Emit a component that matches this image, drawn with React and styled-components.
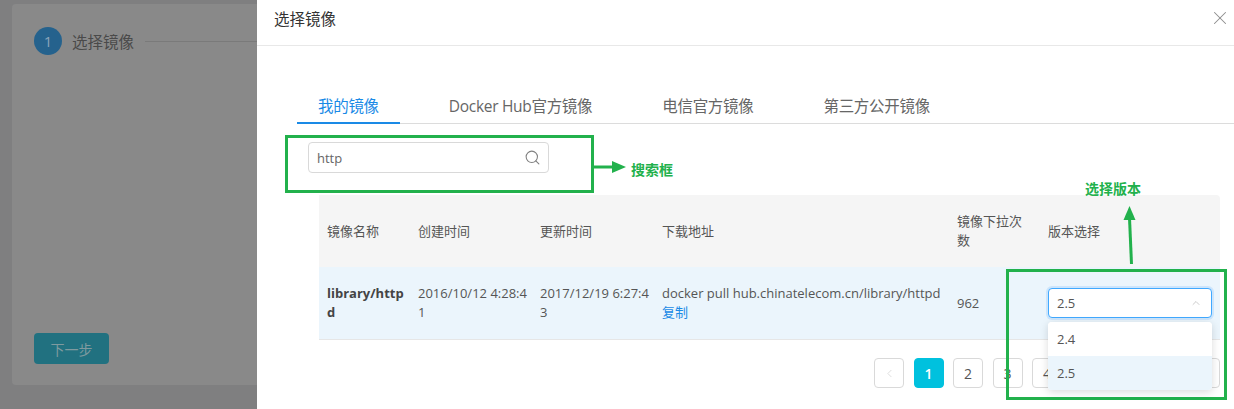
import styled, { createGlobalStyle } from "styled-components";
import { Search, X, ChevronUp, ChevronLeft, ChevronRight } from "lucide-react";

const GlobalStyle = createGlobalStyle`
  html, body {
    margin: 0;
    padding: 0;
    width: 1234px;
    height: 409px;
    overflow: hidden;
    font-family: "Open Sans", "Noto Sans CJK SC", sans-serif;
  }
  * { box-sizing: border-box; }
`;

const GREEN = "#22b14c";

const columns = [
  { key: "name", title: "镜像名称" },
  { key: "created", title: "创建时间" },
  { key: "updated", title: "更新时间" },
  { key: "url", title: "下载地址" },
  { key: "pulls", title: ["镜像下拉次", "数"] },
  { key: "version", title: "版本选择" },
];

const pages = [1, 2, 3, 4, 5, 6, 7];

export default function App() {
  return (
    <Page>
      <GlobalStyle />
      <Backdrop>
        <StepCard>
          <Step>
            <StepDot>1</StepDot>
            <StepLabel>选择镜像</StepLabel>
            <StepLine />
          </Step>
          <NextButton>下一步</NextButton>
        </StepCard>
      </Backdrop>

      <Drawer>
        <Header>
          <Title>选择镜像</Title>
          <Close>
            <X size={22} strokeWidth={1.1} />
          </Close>
        </Header>

        <Tabs>
          <Tab $active>我的镜像</Tab>
          <Tab>Docker Hub官方镜像</Tab>
          <Tab>电信官方镜像</Tab>
          <Tab>第三方公开镜像</Tab>
        </Tabs>

        <Content>
          <SearchBox>
            <span>http</span>
            <Search size={17} strokeWidth={1.5} color="#808080" />
          </SearchBox>

          <Table>
            <HeadRow>
              {columns.map((c) => (
                <Cell key={c.key}>
                  {Array.isArray(c.title)
                    ? c.title.map((l) => <div key={l}>{l}</div>)
                    : c.title}
                </Cell>
              ))}
            </HeadRow>
            <BodyRow>
              <Cell $bold>
                <div>library/http</div>
                <div>d</div>
              </Cell>
              <Cell>
                <div>2016/10/12 4:28:4</div>
                <div>1</div>
              </Cell>
              <Cell>
                <div>2017/12/19 6:27:4</div>
                <div>3</div>
              </Cell>
              <Cell>
                <div>docker pull hub.chinatelecom.cn/library/httpd</div>
                <Link>复制</Link>
              </Cell>
              <Cell>962</Cell>
              <Cell>
                <SelectWrap>
                  <Select>
                    <span>2.5</span>
                    <ChevronUp size={12} strokeWidth={1.3} color="#b0b0b0" />
                  </Select>
                  <Menu>
                    <Option>2.4</Option>
                    <Option $selected>2.5</Option>
                  </Menu>
                </SelectWrap>
              </Cell>
            </BodyRow>
          </Table>

          <Pager>
            <PageBtn $muted>
              <ChevronLeft size={13} strokeWidth={1.2} />
            </PageBtn>
            {pages.map((p) => (
              <PageBtn key={p} $active={p === 1}>
                {p}
              </PageBtn>
            ))}
            <PageBtn>
              <ChevronRight size={13} strokeWidth={1.2} />
            </PageBtn>
          </Pager>
        </Content>
      </Drawer>

      <Annotations width="1234" height="409" viewBox="0 0 1234 409">
        <rect x="286.5" y="136.5" width="306" height="55" fill="none" stroke={GREEN} strokeWidth="3" />
        <line x1="594" y1="167" x2="614" y2="167" stroke={GREEN} strokeWidth="3" />
        <polygon points="612,161 626,167 612,173" fill={GREEN} />
        <rect x="1007.5" y="270.5" width="218" height="128" fill="none" stroke={GREEN} strokeWidth="3" />
        <line x1="1131.5" y1="264" x2="1129.5" y2="218" stroke={GREEN} strokeWidth="3" />
        <polygon points="1123.5,220 1129.5,206 1135.5,220" fill={GREEN} />
      </Annotations>
      <Note $x={631} $y={160}>搜索框</Note>
      <Note $x={1085} $y={179}>选择版本</Note>
    </Page>
  );
}

const Page = styled.div`
  position: relative;
  display: flex;
  width: 1234px;
  height: 409px;
`;

const Backdrop = styled.div`
  width: 257px;
  flex-shrink: 0;
  background: #7f7f80;
  padding: 4px 0 24px 12px;
  display: flex;
`;

const StepCard = styled.div`
  flex: 1;
  background: #898989;
  border-radius: 4px 0 0 4px;
  padding: 23px 0 21px 22px;
  display: flex;
  flex-direction: column;
`;

const Step = styled.div`
  display: flex;
  align-items: center;
`;

const StepDot = styled.div`
  width: 28px;
  height: 28px;
  border-radius: 50%;
  background: #25628d;
  color: #8aa4b8;
  font-size: 15px;
  display: flex;
  align-items: center;
  justify-content: center;
`;

const StepLabel = styled.div`
  margin-left: 10px;
  font-size: 15.5px;
  color: #4a4a4a;
`;

const StepLine = styled.div`
  flex: 1;
  height: 1px;
  margin-left: 11px;
  background: #7a7a7a;
`;

const NextButton = styled.div`
  margin-top: auto;
  width: 75px;
  height: 31px;
  border-radius: 4px;
  background: #217180;
  color: #7f9a9f;
  font-size: 14px;
  display: flex;
  align-items: center;
  justify-content: center;
`;

const Drawer = styled.div`
  flex: 1;
  background: #fff;
  display: flex;
  flex-direction: column;
`;

const Header = styled.div`
  height: 46px;
  border-bottom: 1px solid #e8e8e8;
  padding: 9px 3px 0 17px;
  display: flex;
  justify-content: space-between;
  align-items: flex-start;
`;

const Title = styled.div`
  font-size: 15.5px;
  line-height: 20px;
  color: #333;
`;

const Close = styled.div`
  color: #8c8c8c;
  display: flex;
  margin-top: -2px;
`;

const Tabs = styled.div`
  margin: 44px 0 0 40px;
  display: flex;
  border-bottom: 1px solid #dcdcdc;
`;

const Tab = styled.div`
  padding: 0 21px;
  margin-right: 28px;
  height: 34px;
  line-height: 32px;
  font-size: 15.5px;
  letter-spacing: -0.3px;
  color: ${(p) => (p.$active ? "#1a8ae6" : "#666")};
  border-bottom: 2px solid ${(p) => (p.$active ? "#1a8ae6" : "transparent")};
  margin-bottom: -1px;
`;

const Content = styled.div`
  padding: 0 14px 0 40px;
  display: flex;
  flex-direction: column;
`;

const SearchBox = styled.div`
  margin: 18px 0 0 11px;
  width: 241px;
  height: 31px;
  border: 1px solid #d9d9d9;
  border-radius: 4px;
  padding: 0 7px 0 8px;
  display: flex;
  align-items: center;
  justify-content: space-between;
  font-size: 13px;
  color: #666;
`;

const Table = styled.div`
  margin: 22px 0 0 22px;
  font-size: 13px;
  color: #555;
`;

const HeadRow = styled.div`
  display: grid;
  grid-template-columns: 91px 122px 122px 295px 91px 1fr;
  align-items: center;
  height: 72px;
  background: #f5f5f5;
  border-radius: 0 4px 0 0;
`;

const BodyRow = styled(HeadRow)`
  height: 73px;
  background: #ebf5fc;
  border-radius: 0;
  border-bottom: 1px solid #e6e6e6;
`;

const Cell = styled.div`
  padding: 0 8px;
  line-height: 19px;
  white-space: nowrap;
  font-weight: ${(p) => (p.$bold ? 700 : 400)};
  color: ${(p) => (p.$bold ? "#444" : "inherit")};
`;

const Link = styled.div`
  color: #1a8ae6;
`;

const SelectWrap = styled.div`
  position: relative;
`;

const Select = styled.div`
  height: 30px;
  border: 1px solid #40a9ff;
  border-radius: 4px;
  box-shadow: 0 0 0 2px rgba(24, 144, 255, 0.15);
  background: #fff;
  padding: 0 9px 0 8px;
  display: flex;
  align-items: center;
  justify-content: space-between;
  font-size: 13px;
  color: #555;
`;

const Menu = styled.div`
  position: absolute;
  top: 34px;
  left: 0;
  right: 0;
  background: #fff;
  border-radius: 4px;
  box-shadow: 0 2px 8px rgba(0, 0, 0, 0.15);
  overflow: hidden;
  z-index: 2;
`;

const Option = styled.div`
  height: 34px;
  line-height: 34px;
  padding-left: 9px;
  font-size: 13px;
  color: #555;
  background: ${(p) => (p.$selected ? "#ebf5fc" : "#fff")};
`;

const Pager = styled.div`
  margin-top: 18px;
  display: flex;
  justify-content: flex-end;
  gap: 9.5px;
`;

const PageBtn = styled.div`
  width: 30px;
  height: 30px;
  border-radius: 4px;
  border: 1px solid ${(p) => (p.$active ? "#00c1de" : "#d9d9d9")};
  background: ${(p) => (p.$active ? "#00c1de" : "#fff")};
  color: ${(p) => (p.$active ? "#fff" : p.$muted ? "#ccc" : "#555")};
  font-size: 14px;
  font-weight: ${(p) => (p.$active ? 600 : 400)};
  display: flex;
  align-items: center;
  justify-content: center;
`;

const Annotations = styled.svg`
  position: absolute;
  left: 0;
  top: 0;
  pointer-events: none;
`;

const Note = styled.div`
  position: absolute;
  left: ${(p) => p.$x}px;
  top: ${(p) => p.$y}px;
  font-size: 14px;
  font-weight: 700;
  line-height: 20px;
  color: ${GREEN};
`;
